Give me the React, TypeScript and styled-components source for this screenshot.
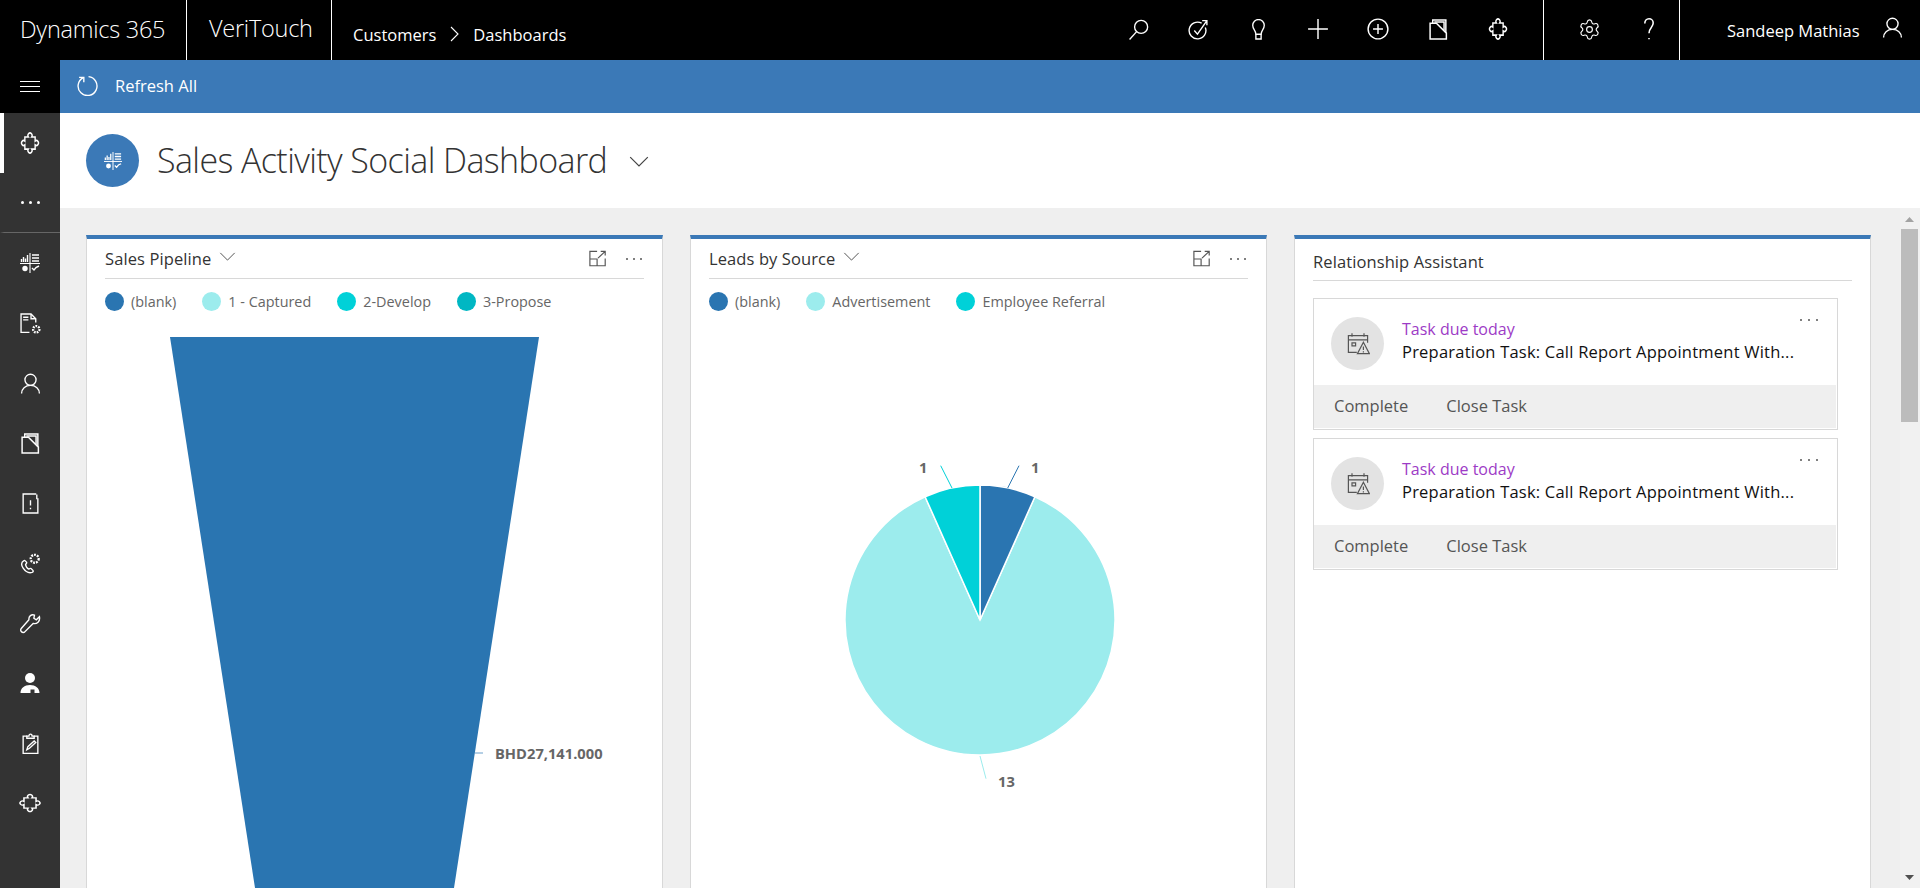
import * as React from "react";
import styled, { createGlobalStyle } from "styled-components";
import { Settings } from "lucide-react";

const GlobalStyle = createGlobalStyle`
  html, body {
    margin: 0;
    height: 100%;
    overflow: hidden;
    font-family: "Open Sans", "Noto Sans", sans-serif;
  }
`;

const Page = styled.div`
  height: 100vh;
  display: flex;
  flex-direction: column;
  overflow: hidden;
`;

/* top bar */
const TopBar = styled.header`
  height: 60px;
  flex: none;
  display: flex;
  align-items: stretch;
  background: #000;
  color: #fff;
`;
const BrandCell = styled.div<{ $width: number; $pad: number; $lift: number }>`
  width: ${(p) => p.$width}px;
  padding: 0 0 ${(p) => p.$lift}px ${(p) => p.$pad}px;
  box-sizing: border-box;
  display: flex;
  align-items: center;
  border-right: 1px solid #fff;
  font-size: 23.5px;
  font-weight: 300;
  letter-spacing: -0.25px;
`;
const Crumbs = styled.div`
  display: flex;
  align-items: center;
  padding: 8px 0 0 21px;
  font-size: 16.5px;
`;
const CrumbChevron = styled.svg`
  width: 9px;
  height: 16px;
  margin: 0 14px;
  fill: none;
  stroke: #fff;
  stroke-width: 1.1;
`;
const TopGroup = styled.div<{ $padLeft: number; $padRight: number }>`
  display: flex;
  align-items: center;
  padding: 0 ${(p) => p.$padRight}px 0 ${(p) => p.$padLeft}px;
  border-right: 1px solid #fff;
`;
const TopSpacer = styled.div`
  flex: 1;
`;
const TopSlot = styled.div`
  width: 60px;
  height: 60px;
  display: flex;
  align-items: center;
  justify-content: center;
  padding-bottom: 2px;
  box-sizing: border-box;
`;
const UserCell = styled.div`
  width: 240px;
  box-sizing: border-box;
  display: flex;
  align-items: center;
  padding-left: 47px;
  font-size: 16.5px;
`;
const UserIconWrap = styled.div`
  margin-left: 22px;
  display: flex;
  margin-bottom: 5px;
`;

/* main frame */
const Frame = styled.div`
  flex: 1;
  min-height: 0;
  display: flex;
`;
const Nav = styled.nav`
  width: 60px;
  flex: none;
  background: #333;
  color: #fff;
  display: flex;
  flex-direction: column;
`;
const Burger = styled.div`
  height: 53px;
  background: #000;
  display: flex;
  flex-direction: column;
  align-items: center;
  justify-content: center;
  gap: 4px;
`;
const BurgerLine = styled.span`
  width: 20px;
  height: 1px;
  background: #fff;
`;
const NavItem = styled.div<{ $active?: boolean; $rule?: boolean }>`
  height: 60px;
  flex: none;
  box-sizing: border-box;
  display: flex;
  align-items: center;
  justify-content: center;
  border-left: 4px solid ${(p) => (p.$active ? "#fff" : "transparent")};
  border-bottom: ${(p) => (p.$rule ? "1px solid #666" : "0")};
  padding-right: 4px;
`;
const Dots = styled.div<{ $size: number; $gap: number; $color: string }>`
  display: flex;
  gap: ${(p) => p.$gap}px;
  & > span {
    width: ${(p) => p.$size}px;
    height: ${(p) => p.$size}px;
    background: ${(p) => p.$color};
    border-radius: 50%;
  }
`;

const Main = styled.main`
  flex: 1;
  min-width: 0;
  display: flex;
  flex-direction: column;
`;
const CommandBar = styled.div`
  height: 53px;
  flex: none;
  box-sizing: border-box;
  background: #3b79b7;
  color: #fff;
  display: flex;
  align-items: center;
  padding: 0 0 2px 17px;
  gap: 17px;
  font-size: 16.5px;
`;
const PageHeader = styled.div`
  height: 95px;
  flex: none;
  background: #fff;
  display: flex;
  align-items: center;
  padding-left: 26px;
`;
const HeaderBadge = styled.div`
  width: 53px;
  height: 53px;
  border-radius: 50%;
  background: #3b79b7;
  color: #fff;
  display: flex;
  align-items: center;
  justify-content: center;
`;
const PageTitle = styled.h1`
  margin: 0 0 2px 18px;
  font-size: 34px;
  font-weight: 300;
  letter-spacing: -0.6px;
  color: #333;
`;
const TitleChevron = styled.svg`
  width: 20px;
  height: 11px;
  margin: 2px 0 0 22px;
  fill: none;
  stroke: #444;
  stroke-width: 1.1;
`;

const Content = styled.div`
  flex: 1;
  min-height: 0;
  display: flex;
  background: #efefef;
`;
const Cards = styled.div`
  flex: 1;
  display: grid;
  grid-template-columns: repeat(3, 1fr);
  gap: 27px;
  padding: 27px 29px 0 26px;
  min-width: 0;
`;
const Card = styled.section`
  background: #fff;
  border-top: 4px solid #3b79b7;
  border-left: 1px solid #d8d8d8;
  border-right: 1px solid #d8d8d8;
  overflow: hidden;
  min-width: 0;
`;
const CardHead = styled.div<{ $tall?: boolean }>`
  height: ${(p) => (p.$tall ? 42 : 40)}px;
  margin: 0 18px;
  box-sizing: border-box;
  display: flex;
  align-items: center;
  border-bottom: 1px solid #d8d8d8;
  padding-top: ${(p) => (p.$tall ? 3 : 0)}px;
`;
const CardTitle = styled.h2<{ $strong?: boolean }>`
  margin: 0;
  font-size: 16.5px;
  font-weight: ${(p) => (p.$strong ? 500 : 400)};
  letter-spacing: 0.1px;
  color: #333;
`;
const HeadChevron = styled.svg`
  width: 17px;
  height: 9px;
  margin: 0 0 5px 8px;
  fill: none;
  stroke: #444;
  stroke-width: 1;
`;
const HeadTools = styled.div`
  margin-left: auto;
  display: flex;
  align-items: center;
  gap: 19px;
  padding-right: 2px;
  color: #555;
`;
const Legend = styled.div`
  display: flex;
  align-items: center;
  height: 58px;
  padding: 0 18px 14px;
  box-sizing: border-box;
  gap: 26px;
`;
const LegendItem = styled.div`
  display: flex;
  align-items: center;
  gap: 7px;
  font-size: 14.4px;
  color: #666;
`;
const Swatch = styled.span<{ $color: string }>`
  width: 19px;
  height: 19px;
  border-radius: 50%;
  background: ${(p) => p.$color};
`;
const ChartSvg = styled.svg`
  display: block;
  width: 575px;
  height: 551px;
`;
const ChartLabel = styled.text`
  font-size: 14.7px;
  font-weight: 700;
  fill: #666;
`;

/* relationship assistant */
const TaskList = styled.div`
  display: flex;
  flex-direction: column;
  gap: 8px;
  padding: 17px 18px 0;
`;
const TaskCard = styled.article`
  position: relative;
  width: 525px;
  height: 132px;
  box-sizing: border-box;
  border: 1px solid #d8d8d8;
  display: flex;
  flex-direction: column;
`;
const TaskBody = styled.div`
  flex: 1;
  display: flex;
  align-items: flex-start;
  padding: 18px 0 0 17px;
  gap: 18px;
`;
const TaskBadge = styled.div`
  width: 53px;
  height: 53px;
  flex: none;
  border-radius: 50%;
  background: #e3e3e3;
  color: #555;
  display: flex;
  align-items: center;
  justify-content: center;
`;
const TaskText = styled.div`
  display: flex;
  flex-direction: column;
  gap: 1px;
  padding-top: 1px;
  line-height: 22px;
  white-space: nowrap;
`;
const TaskDue = styled.span`
  font-size: 16px;
  color: #9d3bc6;
`;
const TaskName = styled.span`
  font-size: 16.5px;
  letter-spacing: 0.22px;
  color: #111;
`;
const TaskMenu = styled.div`
  position: absolute;
  top: 20px;
  right: 19px;
`;
const TaskFooter = styled.div`
  height: 43px;
  flex: none;
  margin: 0 1px 1px 0;
  background: #efefef;
  display: flex;
  align-items: center;
  gap: 38px;
  padding: 0 0 2px 20px;
  box-sizing: border-box;
  font-size: 16.5px;
  color: #555;
`;

const Scrollbar = styled.div`
  width: 20px;
  flex: none;
  background: #f1f1f1;
  display: flex;
  flex-direction: column;
  align-items: center;
  padding: 0 2px 0 1px;
  box-sizing: border-box;
`;
const ScrollArrow = styled.svg<{ $bottom?: boolean }>`
  width: 9px;
  height: 5px;
  flex: none;
  margin-top: ${(p) => (p.$bottom ? "auto" : "9px")};
  margin-bottom: ${(p) => (p.$bottom ? "8px" : "0")};
  fill: ${(p) => (p.$bottom ? "#505050" : "#a3a3a3")};
`;
const ScrollThumb = styled.div`
  width: 17px;
  height: 193px;
  margin-top: 7px;
  background: #bcbcbc;
`;

/* icons */
type IconProps = { size?: number; width?: number };

const Line: React.FC<IconProps & { children: React.ReactNode }> = ({
  size = 20,
  width = 1.3,
  children,
}) => (
  <svg
    width={size}
    height={size}
    viewBox="0 0 20 20"
    fill="none"
    stroke="currentColor"
    strokeWidth={width}
  >
    {children}
  </svg>
);

const puzzlePath =
  "M8.250 4.500A2.200 2.200 0 1 1 11.750 4.500H15.500V8.250A2.200 2.200 0 1 1 15.500 11.750V15.500H11.750A2.200 2.200 0 1 1 8.250 15.500H4.500V11.750A2.200 2.200 0 1 1 4.500 8.250V4.500Z";

const SearchIcon = () => (
  <Line size={21}>
    <circle cx="12.5" cy="7.5" r="6.2" />
    <path d="M8.2 12 1.5 19.5" />
  </Line>
);
const GoalIcon = () => (
  <Line size={21}>
    <path d="M13 4A8 8 0 1 0 16.5 8" />
    <path d="m6 11 3 3.500L18 1.500M13.500 1.500H18V6" />
  </Line>
);
const BulbIcon = () => (
  <Line size={21}>
    <path d="M7.500 14.500C7.500 10.500 4.500 10 4.500 6a5.500 5.500 0 0 1 11 0c0 4-3 4.500-3 8.500z" />
    <path d="M7.500 14.500V19h5v-4.500" />
  </Line>
);
const PlusIcon = () => (
  <Line size={22}>
    <path d="M10 1v18M1 10h18" />
  </Line>
);
const CirclePlusIcon = () => (
  <Line size={22}>
    <circle cx="10" cy="10" r="9" />
    <path d="M10 5.500v9M5.500 10h9" />
  </Line>
);
const FolderIcon = () => (
  <Line size={21} width={1.4}>
    <path d="M4.500 4V1H17v12M6 2.800h9.300V11" />
    <path d="M2 19V4h6l9.500 9.500V19z" />
  </Line>
);
const PuzzleIcon = () => (
  <Line size={22} width={1.5}>
    <g transform="translate(1.500 0) scale(.85 1)">
      <path d={puzzlePath} />
    </g>
  </Line>
);
const WidePuzzleIcon = () => (
  <Line size={22} width={1.4}>
    <g transform="translate(0 1.500) scale(1 .85)">
      <path d={puzzlePath} />
    </g>
  </Line>
);
const QuestionIcon = () => (
  <Line size={24}>
    <path d="M6.500 5.500C6.500 3 8 1.500 10 1.500s3.500 1.500 3.500 3.500c0 3.500-3.500 4-3.500 8.500" />
    <path d="M10 17.500v1" />
  </Line>
);
const UserIcon = () => (
  <Line size={21}>
    <circle cx="10" cy="6.500" r="5.300" />
    <path d="M1.500 19.500c0-4.500 3.500-7.700 8.500-7.700s8.500 3.200 8.500 7.700" />
  </Line>
);
const RefreshIcon = () => (
  <Line size={21}>
    <path d="M6 2.500a9 9 0 1 0 5-.9" />
    <path d="M6.500 7V2.300H2" />
  </Line>
);
const DashboardIcon: React.FC<{ size?: number }> = ({ size = 20 }) => (
  <Line size={size} width={1.1}>
    <path d="M0 10.500h20M10 0v20" />
    <path d="M1.500 9V6M3.500 9V4M5.500 9V5.500M7.500 9V2" strokeWidth="1.400" />
    <path d="M12 2h7M12 5h7M12 8h7" strokeWidth="1.400" />
    <circle cx="5" cy="15.500" r="2.700" fill="currentColor" stroke="none" />
    <path d="m12 15 2 2 2-2.500 3-1.500" strokeWidth="1.400" />
  </Line>
);
const DocGearIcon = () => (
  <Line size={21}>
    <path d="M9 18.500H1V1h9.500L15 5.500V9" />
    <path d="M10.500 1v4.500H15M3 4h5M3 6.500h5" />
    <circle cx="15.500" cy="15.500" r="3" strokeWidth="2.200" strokeDasharray="1.600 1" />
  </Line>
);
const NoteIcon = () => (
  <Line size={21}>
    <path d="M15.500 1H3v18h14V5" />
    <path d="M10 7v5M10 14v1.500M16 1.500V6" />
  </Line>
);
const PhoneGearIcon = () => (
  <Line size={21}>
    <path d="M3.500 7.500C1 9 1 11.500 3 14.500s5.500 4.800 8.500 4c1.200-.4 1.300-1.200.8-2l-1.800-1.700c-.7-.5-1.300 0-2.200.5-1.500-.5-3-3-3-4.500.8-.7 1.300-1 1-2L5 7.500c-.5-.5-1-.5-1.500 0z" />
    <circle cx="14" cy="5.500" r="3.800" strokeWidth="2.200" strokeDasharray="1.800 1" />
  </Line>
);
const WrenchIcon = () => (
  <Line size={21}>
    <path d="M18.500 3.500 15.500 6.500 13.200 5 13.800 2C11 .8 8 3 8.500 6.500L1 15c-1 1.800.5 4 3 3.500l8.500-8.500c3.500.8 7-2 6-6.500z" />
  </Line>
);
const SolidUserIcon = () => (
  <svg width="20" height="20" viewBox="0 0 20 20" fill="currentColor">
    <circle cx="10" cy="5" r="5" />
    <path d="M.5 20c0-5 4-8 9.500-8s9.500 3 9.500 8h-5v-3.500h-4V20z" />
  </svg>
);
const ClipboardIcon = () => (
  <Line size={21}>
    <path d="M7 3H3v16.500h14V3h-4" />
    <path d="M6.500 5V3h2c0-2.500 3-2.500 3 0h2v2z" />
    <path d="m6.500 16 1-3 6-5.500 1.500 1.500-6 5.500z" />
  </Line>
);
const ExpandIcon = () => (
  <Line size={18}>
    <path d="M9 1.500H1v16h17v-8M1 10h8v7.500" />
    <path d="m10 9 8-7.500M13 1.500h5V6" />
  </Line>
);
const TaskIcon = () => (
  <Line size={24} width={1}>
    <path d="M9 17H2V3h16v6M2 6.500h16M5 1v3M15 1v3" />
    <path d="M5 9h3v2.500H5z" />
    <path d="M14.500 8.500 9.500 18h10zM14.500 12v3M14.500 16v1" />
  </Line>
);

const down = "M1 1l8 8 8-8";

const pipelineLegend = [
  { label: "(blank)", color: "#2a75b1" },
  { label: "1 - Captured", color: "#9ceced" },
  { label: "2-Develop", color: "#00d1d8" },
  { label: "3-Propose", color: "#00b7c3" },
];
const leadsLegend = [
  { label: "(blank)", color: "#2a75b1" },
  { label: "Advertisement", color: "#9ceced" },
  { label: "Employee Referral", color: "#00d1d8" },
];

const topIcons = [
  <SearchIcon key="a" />,
  <GoalIcon key="b" />,
  <BulbIcon key="c" />,
  <PlusIcon key="d" />,
  <CirclePlusIcon key="e" />,
  <FolderIcon key="f" />,
  <PuzzleIcon key="g" />,
];
const navIcons = [
  <DashboardIcon key="a" />,
  <DocGearIcon key="b" />,
  <UserIcon key="c" />,
  <FolderIcon key="d" />,
  <NoteIcon key="e" />,
  <PhoneGearIcon key="f" />,
  <WrenchIcon key="g" />,
  <SolidUserIcon key="h" />,
  <ClipboardIcon key="i" />,
  <WidePuzzleIcon key="j" />,
];

const ThreeDots: React.FC<{ size?: number; gap?: number; color?: string }> = ({
  size = 2,
  gap = 5,
  color = "#555",
}) => (
  <Dots $size={size} $gap={gap} $color={color}>
    <span />
    <span />
    <span />
  </Dots>
);

const ChartHead: React.FC<{ title: string }> = ({ title }) => (
  <CardHead>
    <CardTitle>{title}</CardTitle>
    <HeadChevron viewBox="0 0 18 10">
      <path d={down} />
    </HeadChevron>
    <HeadTools>
      <ExpandIcon />
      <ThreeDots />
    </HeadTools>
  </CardHead>
);

const LegendRow: React.FC<{ items: { label: string; color: string }[] }> = ({
  items,
}) => (
  <Legend>
    {items.map((item) => (
      <LegendItem key={item.label}>
        <Swatch $color={item.color} />
        {item.label}
      </LegendItem>
    ))}
  </Legend>
);

const Task = () => (
  <TaskCard>
    <TaskBody>
      <TaskBadge>
        <TaskIcon />
      </TaskBadge>
      <TaskText>
        <TaskDue>Task due today</TaskDue>
        <TaskName>Preparation Task: Call Report Appointment With...</TaskName>
      </TaskText>
    </TaskBody>
    <TaskMenu>
      <ThreeDots gap={6} />
    </TaskMenu>
    <TaskFooter>
      <span>Complete</span>
      <span>Close Task</span>
    </TaskFooter>
  </TaskCard>
);

export default function App() {
  return (
    <Page>
      <GlobalStyle />
      <TopBar>
        <BrandCell $width={187} $pad={20} $lift={2}>
          Dynamics 365
        </BrandCell>
        <BrandCell $width={145} $pad={22} $lift={4}>
          VeriTouch
        </BrandCell>
        <Crumbs>
          Customers
          <CrumbChevron viewBox="0 0 9 16">
            <path d="M1 1l7 7-7 7" />
          </CrumbChevron>
          Dashboards
        </Crumbs>
        <TopSpacer />
        <TopGroup $padLeft={15} $padRight={15}>
          {topIcons.map((icon, i) => (
            <TopSlot key={i}>{icon}</TopSlot>
          ))}
        </TopGroup>
        <TopGroup $padLeft={15} $padRight={0}>
          <TopSlot>
            <Settings size={23} strokeWidth={1.2} />
          </TopSlot>
          <TopSlot>
            <QuestionIcon />
          </TopSlot>
        </TopGroup>
        <UserCell>
          Sandeep Mathias
          <UserIconWrap>
            <UserIcon />
          </UserIconWrap>
        </UserCell>
      </TopBar>
      <Frame>
        <Nav>
          <Burger>
            <BurgerLine />
            <BurgerLine />
            <BurgerLine />
          </Burger>
          <NavItem $active>
            <PuzzleIcon />
          </NavItem>
          <NavItem $rule>
            <ThreeDots size={3} gap={5} color="#fff" />
          </NavItem>
          {navIcons.map((icon, i) => (
            <NavItem key={i}>{icon}</NavItem>
          ))}
        </Nav>
        <Main>
          <CommandBar>
            <RefreshIcon />
            Refresh All
          </CommandBar>
          <PageHeader>
            <HeaderBadge>
              <DashboardIcon size={18} />
            </HeaderBadge>
            <PageTitle>Sales Activity Social Dashboard</PageTitle>
            <TitleChevron viewBox="0 0 18 10">
              <path d={down} />
            </TitleChevron>
          </PageHeader>
          <Content>
            <Cards>
              <Card>
                <ChartHead title="Sales Pipeline" />
                <LegendRow items={pipelineLegend} />
                <ChartSvg viewBox="1 0 575 551">
                  <path d="M84 0H453L368 551H169z" fill="#2a75b1" />
                  <path d="M389 416h8" stroke="#6b9fcb" strokeWidth="1" />
                  <ChartLabel x="409" y="422">
                    BHD27,141.000
                  </ChartLabel>
                </ChartSvg>
              </Card>
              <Card>
                <ChartHead title="Leads by Source" />
                <LegendRow items={leadsLegend} />
                <ChartSvg viewBox="1 0 575 551">
                  <g stroke="#fff" strokeWidth="1.500">
                    <path
                      d="M290 283 344.900 159.700A135 135 0 1 1 235.100 159.700z"
                      fill="#9ceced"
                    />
                    <path
                      d="M290 283V148A135 135 0 0 1 344.900 159.700z"
                      fill="#2a75b1"
                    />
                    <path
                      d="M290 283V148A135 135 0 0 0 235.100 159.700z"
                      fill="#00d1d8"
                    />
                  </g>
                  <path d="M317.700 151 329 128.700" stroke="#2a75b1" />
                  <path d="M262 151 250.700 128.700" stroke="#00d1d8" />
                  <path d="M290 419 296 441.700" stroke="#9ceced" />
                  <ChartLabel x="341" y="136">
                    1
                  </ChartLabel>
                  <ChartLabel x="229" y="136">
                    1
                  </ChartLabel>
                  <ChartLabel x="308" y="450">
                    13
                  </ChartLabel>
                </ChartSvg>
              </Card>
              <Card>
                <CardHead $tall>
                  <CardTitle $strong>Relationship Assistant</CardTitle>
                </CardHead>
                <TaskList>
                  <Task />
                  <Task />
                </TaskList>
              </Card>
            </Cards>
            <Scrollbar>
              <ScrollArrow viewBox="0 0 9 5">
                <path d="M4.500 0 9 5H0z" />
              </ScrollArrow>
              <ScrollThumb />
              <ScrollArrow $bottom viewBox="0 0 9 5">
                <path d="M0 0h9L4.500 5z" />
              </ScrollArrow>
            </Scrollbar>
          </Content>
        </Main>
      </Frame>
    </Page>
  );
}
